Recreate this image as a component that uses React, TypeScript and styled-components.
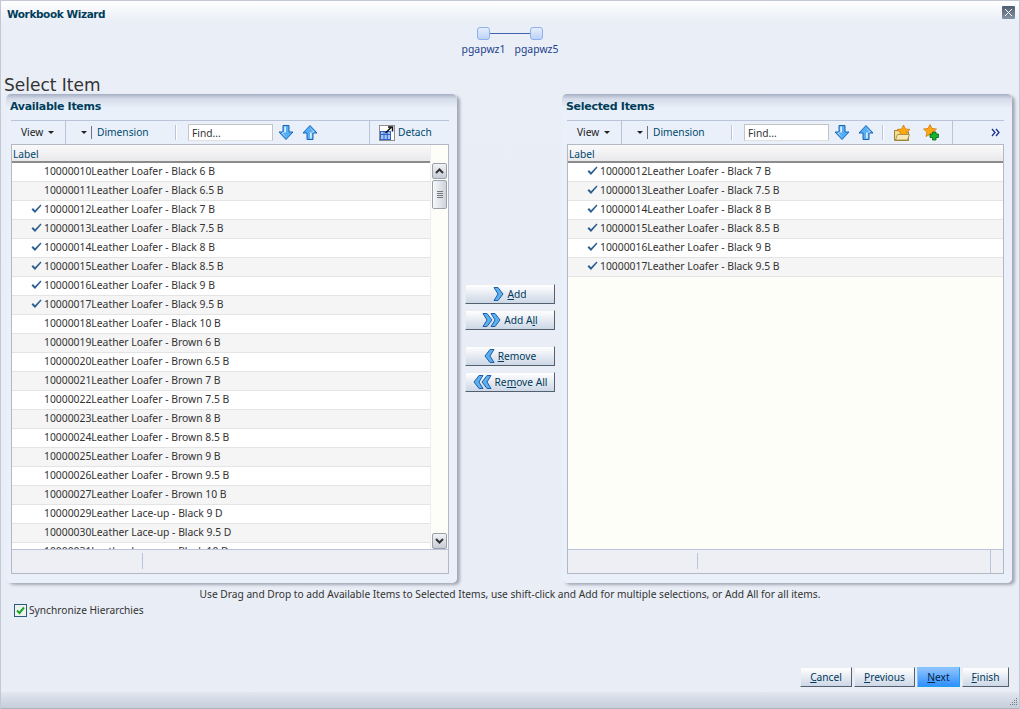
import React, { FC, ReactNode } from 'react';
import styled, { createGlobalStyle } from 'styled-components';

const Global = createGlobalStyle`
  html, body { margin: 0; padding: 0; background: #e9edf5; }
  * { box-sizing: border-box; }
  body { font-family: "Noto Sans", "DejaVu Sans", sans-serif; font-size: 10.2px; color: #333; }
`;

const Shell = styled.div`
  position: relative;
  width: 1020px;
  height: 709px;
  overflow: hidden;
  display: flex;
  flex-direction: column;
  border-top: 1px solid #c3c8d6;
  border-left: 1px solid #c3c8d6;
  border-right: 1px solid #c3c8d6;
  background: linear-gradient(#ffffff 0, #eaeef6 20px, #e9edf5 100%);
`;
const TitleRow = styled.div`
  height: 25px;
  flex: none;
  display: flex;
  align-items: flex-start;
  justify-content: space-between;
  padding: 5px 4px 0 6px;
`;
const Title = styled.h1`
  margin: 1px 0 0;
  font-size: 10.5px;
  line-height: 14px;
  font-weight: 700;
  font-family: "DejaVu Sans", sans-serif;
  letter-spacing: -0.4px;
  color: #003d5b;
`;
const CloseBox = styled.div`
  width: 13px;
  height: 13px;
  border-radius: 1px;
  display: flex;
  align-items: center;
  justify-content: center;
  background: linear-gradient(#4f5d72, #8793a6);
`;
const Train = styled.div`
  height: 43px;
  flex: none;
  display: flex;
  justify-content: center;
  position: relative;
`;
const Step = styled.div`
  width: 53px;
  display: flex;
  flex-direction: column;
  align-items: center;
  gap: 2px;
  padding-top: 1px;
`;
const Node = styled.div`
  width: 13px;
  height: 13px;
  border: 1px solid #8fb0ee;
  border-radius: 3px;
  background: linear-gradient(#e6eefc, #bcd2f7);
  position: relative;
  z-index: 1;
`;
const StepLink = styled.div`
  position: absolute;
  top: 7px;
  left: 50%;
  width: 40px;
  margin-left: -20px;
  height: 1px;
  background: #3f63ad;
`;
const StepLabel = styled.span`
  font-size: 10.4px;
  line-height: 14px;
  color: #1c3f8e;
`;
const Heading = styled.h2`
  flex: none;
  margin: 0;
  height: 25px;
  padding: 5px 0 0 3px;
  font-family: "DejaVu Sans", sans-serif;
  font-size: 17px;
  line-height: 22px;
  font-weight: 400;
  color: #333;
`;
const Main = styled.div`
  flex: none;
  height: 489px;
  display: flex;
  padding-left: 5px;
`;
const Panel = styled.section<{ $width: number }>`
  width: ${(p) => p.$width}px;
  height: 489px;
  display: flex;
  flex-direction: column;
  padding: 0 8px 9px 5px;
  background: linear-gradient(#a6afc3 0, #d5dcea 5px, #e9f0f9 14px);
  border-radius: 5px;
  box-shadow: 3px 2px 3px #a4aab6;
`;
const PanelTitle = styled.h3`
  flex: none;
  margin: 0 0 0 -1px;
  height: 26px;
  padding-top: 6px;
  font-family: "DejaVu Sans", sans-serif;
  font-size: 11px;
  line-height: 14px;
  font-weight: 700;
  letter-spacing: -0.3px;
  color: #003d5b;
`;
const Toolbar = styled.div`
  flex: none;
  height: 24px;
  display: flex;
  align-items: center;
  border-top: 1px solid #b9c4da;
`;
const ToolSection = styled.div<{ $width: number; $divider?: boolean; $pad?: number; $gap?: number; $end?: boolean }>`
  flex: none;
  width: ${(p) => p.$width}px;
  height: 100%;
  display: flex;
  align-items: center;
  justify-content: ${(p) => (p.$end ? 'flex-end' : 'flex-start')};
  padding-left: ${(p) => p.$pad ?? 0}px;
  padding-right: ${(p) => (p.$end ? 2 : 0)}px;
  gap: ${(p) => p.$gap ?? 0}px;
  border-right: ${(p) => (p.$divider ? '1px solid #b9c4da' : 'none')};
`;
const ToolText = styled.span`
  color: #222;
  line-height: 14px;
  margin-bottom: 2px;
`;
const Caret = styled.span`
  display: inline-block;
  width: 0;
  height: 0;
  border-left: 3.5px solid transparent;
  border-right: 3.5px solid transparent;
  border-top: 3.5px solid #222;
`;
const ShortRule = styled.span`
  flex: none;
  width: 1px;
  height: 15px;
  background: #b9c4da;
  box-shadow: 1px 0 0 #fff;
`;
const DarkRule = styled.span`
  flex: none;
  width: 1px;
  height: 13px;
  background: #6b7480;
`;
const Link = styled.span`
  color: #00486e;
  line-height: 14px;
  margin-bottom: 2px;
`;
const FindBox = styled.input`
  flex: none;
  width: 85px;
  height: 17px;
  margin: 0 5px 0 0;
  padding: 0 3px;
  border: 1px solid #c4c4c4;
  border-bottom-color: #e0e0e0;
  background: #fff;
  font: inherit;
  color: #333;
  &::placeholder { color: #333; opacity: 1; }
`;
const ArrowPair = styled.span`
  display: flex;
  gap: 8px;
`;
const TableBox = styled.div`
  flex: 1;
  min-height: 0;
  display: flex;
  flex-direction: column;
  border: 1px solid #b4b8c2;
`;
const TableMain = styled.div`
  flex: 1;
  min-height: 0;
  display: flex;
`;
const Grid = styled.div`
  flex: 1;
  min-width: 0;
  overflow: hidden;
  display: flex;
  flex-direction: column;
  background: #fefef9;
`;
const HeadCell = styled.div`
  flex: none;
  height: 18px;
  padding: 1px 0 0 1px;
  line-height: 16px;
  color: #00486e;
  background: linear-gradient(#fafafa, #e9e9ed);
  border-bottom: 2px solid #8c8c8c;
`;
const Row = styled.div<{ $odd: boolean }>`
  flex: none;
  height: 19px;
  padding-bottom: 2px;
  display: flex;
  align-items: center;
  background: ${(p) => (p.$odd ? '#f5f5f5' : '#ffffff')};
  border-bottom: 1px solid #e4e4e4;
  white-space: nowrap;
  font-size: 10.35px;
  color: #333;
`;
const CheckSlot = styled.span`
  flex: none;
  width: 32px;
  padding-left: 19px;
  display: flex;
  align-items: center;
`;
const Scrollbar = styled.div`
  flex: none;
  width: 18px;
  display: flex;
  flex-direction: column;
  justify-content: space-between;
  background: #fefef9;
  border-left: 1px solid #eceef0;
  padding: 18px 1px 0 1px;
`;
const ScrollTop = styled.div`
  display: flex;
  flex-direction: column;
  gap: 1px;
`;
const ScrollArrow = styled.div`
  height: 16px;
  width: 15px;
  display: flex;
  align-items: center;
  justify-content: center;
  border: 1px solid #9aa0aa;
  border-radius: 2px;
  background: linear-gradient(#f2f3f6, #c7ccd6);
`;
const ScrollThumb = styled.div`
  height: 29px;
  width: 15px;
  display: flex;
  flex-direction: column;
  align-items: center;
  justify-content: center;
  gap: 1px;
  border: 1px solid #9aa0aa;
  border-radius: 2px;
  background: linear-gradient(90deg, #f7f8fa, #cfd3dc);
`;
const Grip = styled.span`
  width: 6px;
  height: 1px;
  background: #777;
`;
const Status = styled.div`
  flex: none;
  height: 24px;
  display: flex;
  justify-content: space-between;
  background: #eeeff5;
  border-top: 1px solid #b9c4da;
`;
const StatusCell = styled.div<{ $width: number; $left?: boolean }>`
  flex: none;
  width: ${(p) => p.$width}px;
  height: 100%;
  display: flex;
  justify-content: flex-end;
  border-left: ${(p) => (p.$left ? '1px solid #b9c4da' : 'none')};
`;
const StatusRule = styled.span`
  width: 1px;
  height: 16px;
  margin-top: 3px;
  background: #b9c4da;
`;
const Shuttle = styled.div`
  flex: none;
  width: 105px;
  display: flex;
  flex-direction: column;
  align-items: center;
  padding: 190px 0 0 1px;
`;
const ShuttleButton = styled.button<{ $gap: number }>`
  width: 90px;
  height: 20px;
  margin: ${(p) => p.$gap}px 0 0;
  padding: 0;
  display: flex;
  align-items: center;
  justify-content: center;
  gap: 3px;
  font: inherit;
  color: #00395b;
  background: linear-gradient(#ffffff, #cdd7e6);
  border: 1px solid;
  border-color: #e9edf3 #55606e #55606e #e9edf3;
`;
const Hint = styled.p`
  flex: none;
  height: 22px;
  margin: 0;
  padding-top: 4px;
  line-height: 14px;
  text-align: center;
  color: #333;
`;
const SyncRow = styled.label`
  flex: none;
  height: 14px;
  margin-top: -2px;
  padding-left: 13px;
  display: flex;
  align-items: center;
  gap: 2px;
  color: #333;
`;
const CheckBox = styled.span`
  width: 13px;
  height: 13px;
  display: flex;
  align-items: center;
  justify-content: center;
  background: #eef2ee;
  border: 1px solid #2b5a80;
`;
const Actions = styled.div`
  flex: none;
  margin-top: 50px;
  padding-right: 10px;
  display: flex;
  justify-content: flex-end;
  gap: 2px;
`;
const ActionButton = styled.button<{ $width: number; $primary?: boolean }>`
  width: ${(p) => p.$width}px;
  height: 20px;
  margin: 0;
  padding: 0;
  font: inherit;
  color: ${(p) => (p.$primary ? '#00263f' : '#00395b')};
  background: ${(p) =>
    p.$primary ? 'linear-gradient(#8fc4ff, #2f8fff)' : 'linear-gradient(#ffffff, #cdd7e6)'};
  border: 1px solid;
  border-color: ${(p) =>
    p.$primary ? '#7fc4ff #1ea0ee #1ea0ee #7fc4ff' : '#e9edf3 #55606e #55606e #e9edf3'};
`;
const Footer = styled.div`
  position: absolute;
  left: 0;
  right: 0;
  bottom: 0;
  height: 17px;
  background: linear-gradient(#e2e7f0, #c6ceda);
  border-bottom: 1px solid #aeb4bf;
`;
const ResizeGrip = styled.svg`
  position: absolute;
  right: 1px;
  bottom: 1px;
`;

const Check: FC = () => (
  <svg width="11" height="10" viewBox="0 0 11 10">
    <path d="M0.5 5.5 L2 4 L4 6.2 L9.5 0.5 L10.5 1.5 L4 9 Z" fill="#2b5f91" />
  </svg>
);

const ArrowIcon: FC<{ up?: boolean }> = ({ up }) => (
  <svg width="16" height="17" viewBox="0 0 16 17" style={{ flex: 'none' }}>
    <g transform={up ? 'rotate(180 8 8.5)' : undefined}>
      <path d="M5 1.5 H11 V8 H15 L8 15.5 L1 8 H5 Z" fill="#56aef5" stroke="#1a63b5" strokeWidth="1" />
      <path d="M6.2 2.6 H8 V8.6 H4 L8 13 L3.4 9 H6.2 Z" fill="#d4ecff" />
    </g>
  </svg>
);

const Chevrons: FC<{ count: number; left?: boolean }> = ({ count, left }) => (
  <svg
    width={11 + (count - 1) * 8}
    height="16"
    viewBox={`0 0 ${11 + (count - 1) * 8} 16`}
    style={{ flex: 'none', transform: left ? 'scaleX(-1)' : undefined }}
  >
    {Array.from({ length: count }).map((_, i) => (
      <path
        key={i}
        d={`M${1 + i * 8} 1.5 H${5 + i * 8} L${10 + i * 8} 8 L${5 + i * 8} 14.5 H${1 + i * 8} L${5 + i * 8} 8 Z`}
        fill="#5cb0ee"
        stroke="#1c5fa8"
        strokeWidth="1"
        strokeLinejoin="round"
      />
    ))}
  </svg>
);

const DetachIcon: FC = () => (
  <svg width="16" height="16" viewBox="0 0 16 16" style={{ flex: 'none' }}>
    <rect x="0.5" y="0.5" width="15" height="15" fill="#fff" stroke="#222" strokeDasharray="1 1" />
    <rect x="1.5" y="6.5" width="10" height="8" fill="#a9c6f5" stroke="#2f62c9" />
    <path d="M1.5 9.5 H11.5 M5 6.5 V14.5 M8.3 6.5 V14.5" stroke="#2f62c9" />
    <path d="M6.5 8 L12 2.5 M9 2 H13.5 V6.5" stroke="#111" strokeWidth="1.5" fill="none" />
  </svg>
);

const Star: FC<{ x: number; y: number }> = ({ x, y }) => (
  <path
    transform={`translate(${x} ${y})`}
    d="M6.5 0 L8.4 3.9 L13 4.5 L9.6 7.6 L10.5 12 L6.5 9.8 L2.5 12 L3.4 7.6 L0 4.5 L4.6 3.9 Z"
    fill="#ffa70f"
    stroke="#cf7a12"
    strokeWidth="0.8"
  />
);

const FolderStar: FC = () => (
  <svg width="16" height="16" viewBox="0 0 16 16" style={{ flex: 'none' }}>
    <path d="M0.5 5.5 H5 L6 7 H14.5 V15.5 H0.5 Z" fill="#f0dc94" stroke="#9c8438" />
    <Star x={3} y={0} />
    <path d="M1.5 15 L3.5 9.5 H15.5 L13.5 15 Z" fill="#f7e9b6" stroke="#9c8438" strokeWidth="0.8" />
  </svg>
);

const StarPlus: FC = () => (
  <svg width="17" height="17" viewBox="0 0 17 17" style={{ flex: 'none' }}>
    <Star x={0.5} y={0.5} />
    <path
      d="M9.5 8 H13 V10 H15.5 V13.5 H13 V16 H9.5 V13.5 H7 V10 H9.5 Z"
      fill="#12b52d"
      stroke="#075f16"
      strokeWidth="0.8"
    />
  </svg>
);

const ScrollCaret: FC<{ down?: boolean }> = ({ down }) => (
  <svg width="9" height="6" viewBox="0 0 9 6">
    <path
      d={down ? 'M1 1 L4.5 4.5 L8 1' : 'M1 5 L4.5 1.5 L8 5'}
      fill="none"
      stroke="#333"
      strokeWidth="2"
    />
  </svg>
);

interface Item {
  readonly id: string;
  readonly name: string;
  readonly checked?: boolean;
}

const availableItems: Item[] = [
  { id: '10000010', name: 'Leather Loafer - Black 6 B' },
  { id: '10000011', name: 'Leather Loafer - Black 6.5 B' },
  { id: '10000012', name: 'Leather Loafer - Black 7 B', checked: true },
  { id: '10000013', name: 'Leather Loafer - Black 7.5 B', checked: true },
  { id: '10000014', name: 'Leather Loafer - Black 8 B', checked: true },
  { id: '10000015', name: 'Leather Loafer - Black 8.5 B', checked: true },
  { id: '10000016', name: 'Leather Loafer - Black 9 B', checked: true },
  { id: '10000017', name: 'Leather Loafer - Black 9.5 B', checked: true },
  { id: '10000018', name: 'Leather Loafer - Black 10 B' },
  { id: '10000019', name: 'Leather Loafer - Brown 6 B' },
  { id: '10000020', name: 'Leather Loafer - Brown 6.5 B' },
  { id: '10000021', name: 'Leather Loafer - Brown 7 B' },
  { id: '10000022', name: 'Leather Loafer - Brown 7.5 B' },
  { id: '10000023', name: 'Leather Loafer - Brown 8 B' },
  { id: '10000024', name: 'Leather Loafer - Brown 8.5 B' },
  { id: '10000025', name: 'Leather Loafer - Brown 9 B' },
  { id: '10000026', name: 'Leather Loafer - Brown 9.5 B' },
  { id: '10000027', name: 'Leather Loafer - Brown 10 B' },
  { id: '10000029', name: 'Leather Lace-up - Black 9 D' },
  { id: '10000030', name: 'Leather Lace-up - Black 9.5 D' },
  { id: '10000031', name: 'Leather Lace-up - Black 10 D' },
];

const selectedItems = availableItems.filter((item) => item.checked);

const Rows: FC<{ items: Item[] }> = ({ items }) => (
  <>
    {items.map((item, i) => (
      <Row key={item.id} $odd={i % 2 === 1}>
        <CheckSlot>{item.checked && <Check />}</CheckSlot>
        {item.id}
        {item.name}
      </Row>
    ))}
  </>
);

const ViewTools: FC = () => (
  <>
    <ToolSection $width={55} $divider $pad={10} $gap={5}>
      <ToolText>View</ToolText>
      <Caret />
    </ToolSection>
    <ToolSection $width={109} $pad={15} $gap={4}>
      <Caret />
      <DarkRule />
      <Link style={{ marginLeft: 1 }}>Dimension</Link>
    </ToolSection>
    <ShortRule />
    <ToolSection $width={145} $pad={12}>
      <FindBox placeholder="Find..." readOnly />
      <ArrowPair>
        <ArrowIcon />
        <ArrowIcon up />
      </ArrowPair>
    </ToolSection>
  </>
);

const ShuttleItem: FC<{ gap: number; icon: ReactNode; children: ReactNode }> = ({ gap, icon, children }) => (
  <ShuttleButton $gap={gap}>
    {icon}
    <span>{children}</span>
  </ShuttleButton>
);

export default function App() {
  return (
    <Shell>
      <Global />
      <TitleRow>
        <Title>Workbook Wizard</Title>
        <CloseBox>
          <svg width="9" height="9" viewBox="0 0 9 9">
            <path d="M1 1 L8 8 M8 1 L1 8" stroke="#fff" strokeWidth="1" />
          </svg>
        </CloseBox>
      </TitleRow>
      <Train>
        <StepLink />
        <Step>
          <Node />
          <StepLabel>pgapwz1</StepLabel>
        </Step>
        <Step>
          <Node />
          <StepLabel>pgapwz5</StepLabel>
        </Step>
      </Train>
      <Heading>Select Item</Heading>
      <Main>
        <Panel $width={451}>
          <PanelTitle>Available Items</PanelTitle>
          <Toolbar>
            <ViewTools />
            <ToolSection $width={49} $divider />
            <ToolSection $width={69} $pad={9} $gap={3}>
              <DetachIcon />
              <Link>Detach</Link>
            </ToolSection>
          </Toolbar>
          <TableBox>
            <TableMain>
              <Grid>
                <HeadCell>Label</HeadCell>
                <Rows items={availableItems} />
              </Grid>
              <Scrollbar>
                <ScrollTop>
                  <ScrollArrow>
                    <ScrollCaret />
                  </ScrollArrow>
                  <ScrollThumb>
                    <Grip />
                    <Grip />
                    <Grip />
                    <Grip />
                  </ScrollThumb>
                </ScrollTop>
                <ScrollArrow>
                  <ScrollCaret down />
                </ScrollArrow>
              </Scrollbar>
            </TableMain>
            <Status>
              <StatusCell $width={131}>
                <StatusRule />
              </StatusCell>
            </Status>
          </TableBox>
        </Panel>
        <Shuttle>
          <ShuttleItem gap={0} icon={<Chevrons count={1} />}>
            <u>A</u>dd
          </ShuttleItem>
          <ShuttleItem gap={6} icon={<Chevrons count={2} />}>
            Add A<u>l</u>l
          </ShuttleItem>
          <ShuttleItem gap={16} icon={<Chevrons count={1} left />}>
            <u>R</u>emove
          </ShuttleItem>
          <ShuttleItem gap={6} icon={<Chevrons count={2} left />}>
            Re<u>m</u>ove All
          </ShuttleItem>
        </Shuttle>
        <Panel $width={450}>
          <PanelTitle>Selected Items</PanelTitle>
          <Toolbar>
            <ViewTools />
            <ToolSection $width={5} />
            <ShortRule />
            <ToolSection $width={70} $divider $pad={11} $gap={13}>
              <FolderStar />
              <StarPlus />
            </ToolSection>
            <ToolSection $width={49} $end>
              <svg width="9" height="9" viewBox="0 0 9 9">
                <path d="M1 1 L4 4.5 L1 8 M5 1 L8 4.5 L5 8" fill="none" stroke="#1c2f8e" strokeWidth="1.3" />
              </svg>
            </ToolSection>
          </Toolbar>
          <TableBox>
            <TableMain>
              <Grid>
                <HeadCell>Label</HeadCell>
                <Rows items={selectedItems} />
              </Grid>
            </TableMain>
            <Status>
              <StatusCell $width={130}>
                <StatusRule />
              </StatusCell>
              <StatusCell $width={13} $left />
            </Status>
          </TableBox>
        </Panel>
      </Main>
      <Hint>Use Drag and Drop to add Available Items to Selected Items, use shift-click and Add for multiple selections, or Add All for all items.</Hint>
      <SyncRow>
        <CheckBox>
          <svg width="9" height="9" viewBox="0 0 9 9">
            <path d="M1 4.5 L3.5 7 L8 1.5" fill="none" stroke="#1fa32a" strokeWidth="2" />
          </svg>
        </CheckBox>
        Synchronize Hierarchies
      </SyncRow>
      <Actions>
        <ActionButton $width={52}><u>C</u>ancel</ActionButton>
        <ActionButton $width={61}><u>P</u>revious</ActionButton>
        <ActionButton $width={43} $primary><u>N</u>ext</ActionButton>
        <ActionButton $width={47}><u>F</u>inish</ActionButton>
      </Actions>
      <Footer>
        <ResizeGrip width="10" height="10" viewBox="0 0 10 10">
          <path
            d="M8 1 h1 v1 h-1 z M6 3 h1 v1 h-1 z M8 3 h1 v1 h-1 z M4 5 h1 v1 h-1 z M6 5 h1 v1 h-1 z M8 5 h1 v1 h-1 z M2 7 h1 v1 h-1 z M4 7 h1 v1 h-1 z M6 7 h1 v1 h-1 z M8 7 h1 v1 h-1 z"
            fill="#6f7784"
          />
        </ResizeGrip>
      </Footer>
    </Shell>
  );
}
